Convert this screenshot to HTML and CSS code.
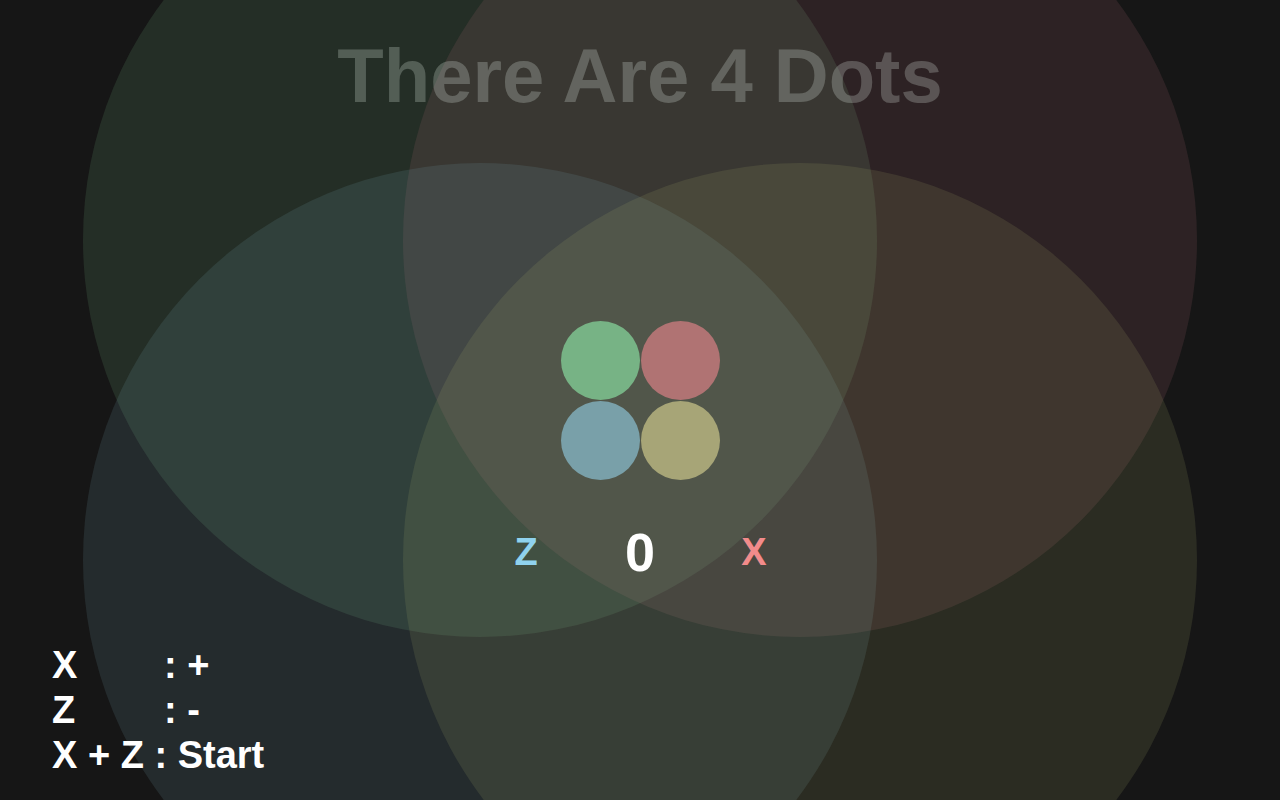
FILE: index.html
```html
<!DOCTYPE html>
<html lang="en">
<head>
<meta charset="utf-8">
<title>There Are 4 Dots</title>
<link rel="stylesheet" href="styles.css">
</head>
<body>
<div class="stage">
  <svg class="halos" width="1280" height="800" viewBox="0 0 1280 800" aria-hidden="true">
    <circle cx="480" cy="240" r="397" fill="rgb(120,185,132)" fill-opacity="0.15"/>
    <circle cx="800" cy="240" r="397" fill="rgb(180,110,118)" fill-opacity="0.15"/>
    <circle cx="480" cy="560" r="397" fill="rgb(118,168,184)" fill-opacity="0.15"/>
    <circle cx="800" cy="560" r="397" fill="rgb(170,172,110)" fill-opacity="0.15"/>
  </svg>

  <main class="content">
    <h1 class="title">There Are 4 Dots</h1>
    <div class="dots">
      <span class="dot dot-green"></span>
      <span class="dot dot-red"></span>
      <span class="dot dot-blue"></span>
      <span class="dot dot-yellow"></span>
    </div>
    <div class="score">
      <span class="key key-z">Z</span>
      <span class="count">0</span>
      <span class="key key-x">X</span>
    </div>
    <div class="controls">
      <div class="row"><span class="k">X</span><span>: +</span></div>
      <div class="row"><span class="k">Z</span><span>: -</span></div>
      <div class="row"><span>X + Z : Start</span></div>
    </div>
  </main>
</div>
</body>
</html>
```

FILE: styles.css
```css
html, body {
  margin: 0;
  padding: 0;
  background: #161616;
}

body {
  font-family: "Liberation Sans", Arial, sans-serif;
  font-weight: bold;
  color: #ffffff;
}

.stage {
  position: relative;
  width: 1280px;
  height: 800px;
  overflow: hidden;
  background: #161616;
}

.halos {
  position: absolute;
  left: 0;
  top: 0;
  display: block;
}

.content {
  position: relative;
  display: flex;
  flex-direction: column;
  align-items: center;
  height: 800px;
}

.title {
  margin: 38px 0 0;
  font-size: 76px;
  line-height: 76px;
  font-weight: bold;
  color: rgba(235, 245, 238, 0.24);
  white-space: nowrap;
}

.dots {
  margin-top: 206px;
  display: grid;
  grid-template-columns: 80px 80px;
  grid-template-rows: 80px 80px;
}

.dot {
  display: block;
  width: 79px;
  height: 79px;
  margin: 0.5px;
  border-radius: 50%;
}

.dot-green  { background: #77b385; }
.dot-red    { background: #b07373; }
.dot-blue   { background: #79a0a9; }
.dot-yellow { background: #a7a577; }

.score {
  margin-top: 45px;
  display: grid;
  grid-template-columns: 114px 114px 114px;
  align-items: center;
  height: 54px;
  text-align: center;
}

.key {
  font-size: 38px;
  line-height: 38px;
}

.key-z { color: #8fd2ee; }
.key-x { color: #f28b8b; }

.count {
  font-size: 54px;
  line-height: 54px;
  color: #ffffff;
}

.controls {
  align-self: flex-start;
  margin: 64px 0 0 52px;
  font-size: 38px;
  line-height: 45px;
}

.row {
  display: flex;
  white-space: pre;
}

.row .k {
  width: 112px;
}
```
